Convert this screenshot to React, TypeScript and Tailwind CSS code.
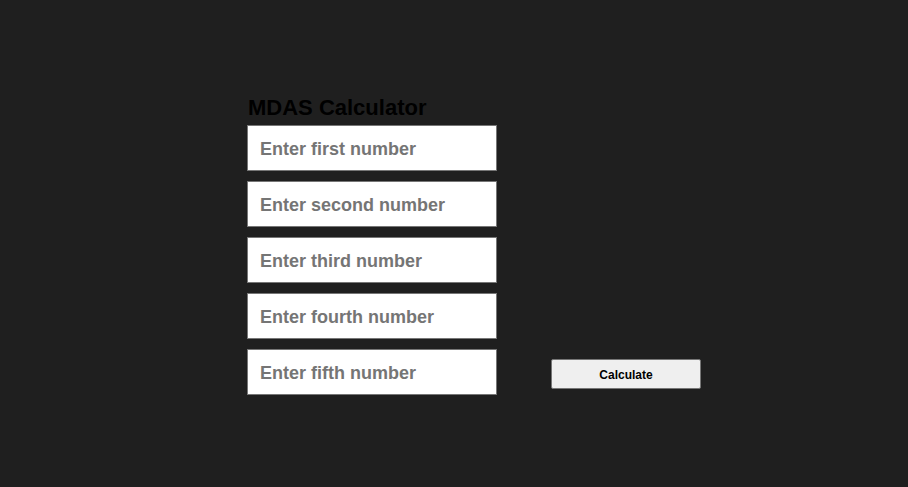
import { useState } from 'react'

const fields = [
  'Enter first number',
  'Enter second number',
  'Enter third number',
  'Enter fourth number',
  'Enter fifth number',
]

export default function App() {
  const [values, setValues] = useState<string[]>(fields.map(() => ''))

  return (
    <div className="min-h-[487px] w-full bg-[#1f1f1f] pl-[247px] pt-[94px] font-['Liberation_Sans',Arial,sans-serif]">
      <div className="flex items-end gap-[54px]">
        <div className="flex w-[250px] flex-col">
          <h1 className="mb-[4px] pl-px text-[22px] font-bold leading-[27px] text-black">MDAS Calculator</h1>
          <div className="flex flex-col gap-[10px]">
            {fields.map((placeholder, i) => (
              <input
                key={placeholder}
                type="text"
                value={values[i]}
                placeholder={placeholder}
                onChange={(e) => {
                  const next = [...values]
                  next[i] = e.target.value
                  setValues(next)
                }}
                className="h-[46px] w-[250px] border border-[#767676] bg-white px-[12px] pt-[3px] text-[18px] font-bold text-black outline-none placeholder:text-[#757575]"
              />
            ))}
          </div>
        </div>
        <button
          type="button"
          className="mb-[6px] h-[30px] w-[150px] rounded-[2px] border border-[#767676] bg-[#efefef] pt-[2px] text-[12px] font-bold text-black"
        >
          Calculate
        </button>
      </div>
    </div>
  )
}
